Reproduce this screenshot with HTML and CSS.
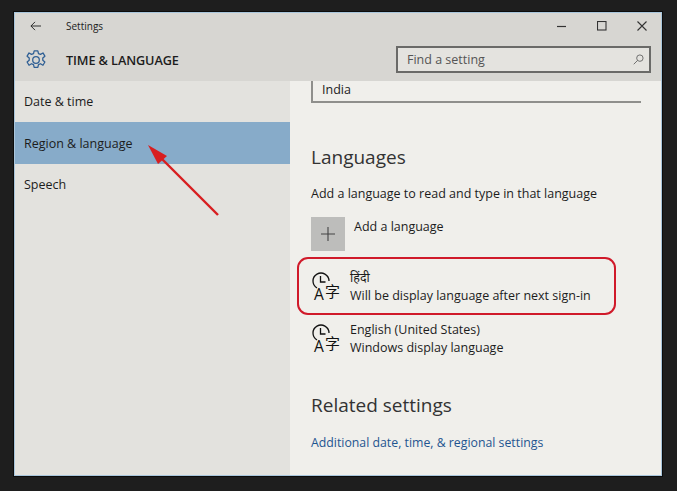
FILE: index.html
```html
<!DOCTYPE html>
<html lang="en">
<head>
<meta charset="utf-8">
<title>Settings</title>
<link rel="stylesheet" href="styles.css">
</head>
<body>
<div class="window">
  <header class="head">
    <div class="titlebar">
      <svg class="back" viewBox="0 0 12 10" width="11" height="10"><path d="M5.500 .5 1 5l4.500 4.500M1 5h11" fill="none" stroke="#222" stroke-width="1"/></svg>
      <span class="apptitle">Settings</span>
      <div class="controls">
        <svg viewBox="0 0 10 10" width="10" height="10"><path d="M0 5.500h9" stroke="#333" stroke-width="1.200"/></svg>
        <svg viewBox="0 0 10 10" width="10" height="10"><rect x=".5" y=".5" width="8.500" height="8.500" fill="none" stroke="#333" stroke-width="1.100"/></svg>
        <svg viewBox="0 0 10 10" width="10" height="10"><path d="M.5 .5l9 9M9.500 .5l-9 9" stroke="#333" stroke-width="1.100"/></svg>
      </div>
    </div>
    <div class="pagebar">
      <svg class="gear" viewBox="0 0 24 24" width="22" height="22" fill="none" stroke="#2f5f94" stroke-width="1.400" stroke-linejoin="round"><circle cx="12" cy="12" r="3.600"/><path d="M10 2h4l.7 3 2.200.9 2.700-1.600 2.100 3.500-2.300 2 0 2.400 2.300 2-2.100 3.500-2.700-1.600-2.200.9-.7 3h-4l-.7-3-2.200-.9-2.700 1.600-2.100-3.500 2.300-2 0-2.400-2.300-2 2.100-3.500 2.700 1.600 2.200-.9z"/></svg>
      <h1 class="pagetitle">TIME &amp; LANGUAGE</h1>
      <div class="search">
        <span>Find a setting</span>
        <svg viewBox="0 0 12 12" width="11" height="11" fill="none" stroke="#666" stroke-width="1"><circle cx="7.500" cy="4.500" r="3.500"/><path d="M5 7 .8 11.200"/></svg>
      </div>
    </div>
  </header>
  <div class="body">
    <nav class="side">
      <div class="navitem">Date &amp; time</div>
      <div class="navitem selected">Region &amp; language</div>
      <div class="navitem">Speech</div>
    </nav>
    <main class="content">
      <div class="country">India</div>
      <h2 class="h-lang">Languages</h2>
      <p class="intro">Add a language to read and type in that language</p>
      <div class="add">
        <div class="plus"><svg viewBox="0 0 14 14" width="14" height="14"><path d="M7 0v14M0 7h14" stroke="#444" stroke-width="1.100"/></svg></div>
        <span>Add a language</span>
      </div>
      <div class="lang hindi">
        <div class="langicon">
          <svg class="clock" viewBox="0 0 18 18" width="18" height="18" fill="none" stroke="#111" stroke-width="1.300"><path d="M5 16A8 8 0 1 1 17 9"/><path d="M8.500 4v6h5"/></svg>
          <span class="a">A</span><span class="zi">字</span>
        </div>
        <div class="langtext"><div>हिंदी</div><div>Will be display language after next sign-in</div></div>
      </div>
      <div class="lang english">
        <div class="langicon">
          <svg class="clock" viewBox="0 0 18 18" width="18" height="18" fill="none" stroke="#111" stroke-width="1.300"><path d="M5 16A8 8 0 1 1 17 9"/><path d="M8.500 4v6h5"/></svg>
          <span class="a">A</span><span class="zi">字</span>
        </div>
        <div class="langtext"><div>English (United States)</div><div>Windows display language</div></div>
      </div>
      <h2 class="h-rel">Related settings</h2>
      <a class="link" href="#">Additional date, time, &amp; regional settings</a>
    </main>
  </div>
  <svg class="arrow" viewBox="0 0 80 80" width="80" height="80"><path d="M73 76 17 20" stroke="#d81e20" stroke-width="2.400"/><path d="M3 6 22 17 13 25z" fill="#d81e20"/></svg>
  <div class="ring"></div>
</div>
</body>
</html>
```
FILE: styles.css
```css
* { box-sizing: border-box; }
html, body { margin: 0; height: 100%; }
body {
  background: #1e1e1e;
  padding: 12px 15px 15px 14px;
  font-family: "Open Sans", "Noto Sans", "Noto Sans Devanagari", "Lohit Devanagari", "Noto Sans CJK SC", sans-serif;
  font-size: 12.500px;
  color: #1c1c1c;
}
.window {
  position: relative;
  width: 648px;
  height: 464px;
  border: 1px solid #a9c6dc;
  box-shadow: 0 0 0 1px #0c0c0c;
  display: flex;
  flex-direction: column;
  background: #f0efeb;
  overflow: hidden;
}
.head { background: #d7d6d2; height: 68px; flex: none; }
.titlebar { height: 25px; display: flex; align-items: center; padding-left: 15px; }
.apptitle { margin-left: 25px; font-size: 10px; }
.controls { margin-left: auto; display: flex; gap: 30px; padding-right: 14px; align-items: center; }
.controls svg { display: block; }
.pagebar { height: 43px; display: flex; align-items: center; padding: 0 10px; }
.gear { flex: none; }
.pagetitle { margin: 0 0 0 19px; font-size: 12.700px; font-weight: 600; letter-spacing: -.1px; }
.search {
  margin-left: auto;
  width: 255px;
  height: 27px;
  border: 2px solid #6a6a68;
  background: #e4e3df;
  display: flex;
  align-items: center;
  justify-content: space-between;
  padding: 0 5px 0 9px;
  color: #555;
  font-size: 12.500px;
}
.body { flex: 1; display: flex; min-height: 0; }
.side { width: 275px; flex: none; background: #e3e2de; }
.navitem { height: 41px; display: flex; align-items: center; padding-left: 9px; font-size: 12.500px; }
.navitem.selected { background: #87abc9; height: 42px; }
.content { flex: 1; padding: 0 20px 0 21px; display: flex; flex-direction: column; }
.country { height: 22px; flex: none; border-bottom: 2px solid #8f8f8c; border-left: 2px solid #8f8f8c; padding: 0 0 3px 9px; display: flex; align-items: center; }
.h-lang, .h-rel { margin: 0; font-weight: 400; font-size: 19px; line-height: 25px; color: #333; }
.h-lang { margin-top: 42px; }
.intro { margin: 15px 0 0; line-height: 18px; }
.add { display: flex; margin-top: 14px; gap: 9px; line-height: 18px; }
.add span { margin-top: 1px; }
.plus { width: 34px; height: 34px; background: #bdbdbb; display: flex; align-items: center; justify-content: center; }
.lang { display: flex; gap: 6px; height: 36px; }
.hindi { margin-top: 18px; }
.english { margin-top: 16px; }
.langicon { position: relative; width: 33px; height: 36px; flex: none; }
.clock { position: absolute; left: 1px; top: 3px; }
.a { position: absolute; left: 3px; top: 16px; font-size: 15.500px; line-height: 18px; color: #111; }
.zi { position: absolute; left: 14px; top: 13px; font-size: 15px; line-height: 18px; color: #111; font-family: "Noto Sans CJK SC", sans-serif; }
.langtext { line-height: 17.500px; }
.h-rel { margin-top: 36px; }
.link { margin-top: 16px; font-size: 12.300px; line-height: 18px; color: #1f5590; text-decoration: none; }
.arrow { position: absolute; left: 130px; top: 126px; }
.ring {
  position: absolute;
  left: 282px;
  top: 244px;
  width: 319px;
  height: 58px;
  border: 2px solid #d01a2a;
  border-radius: 11px;
}
```
